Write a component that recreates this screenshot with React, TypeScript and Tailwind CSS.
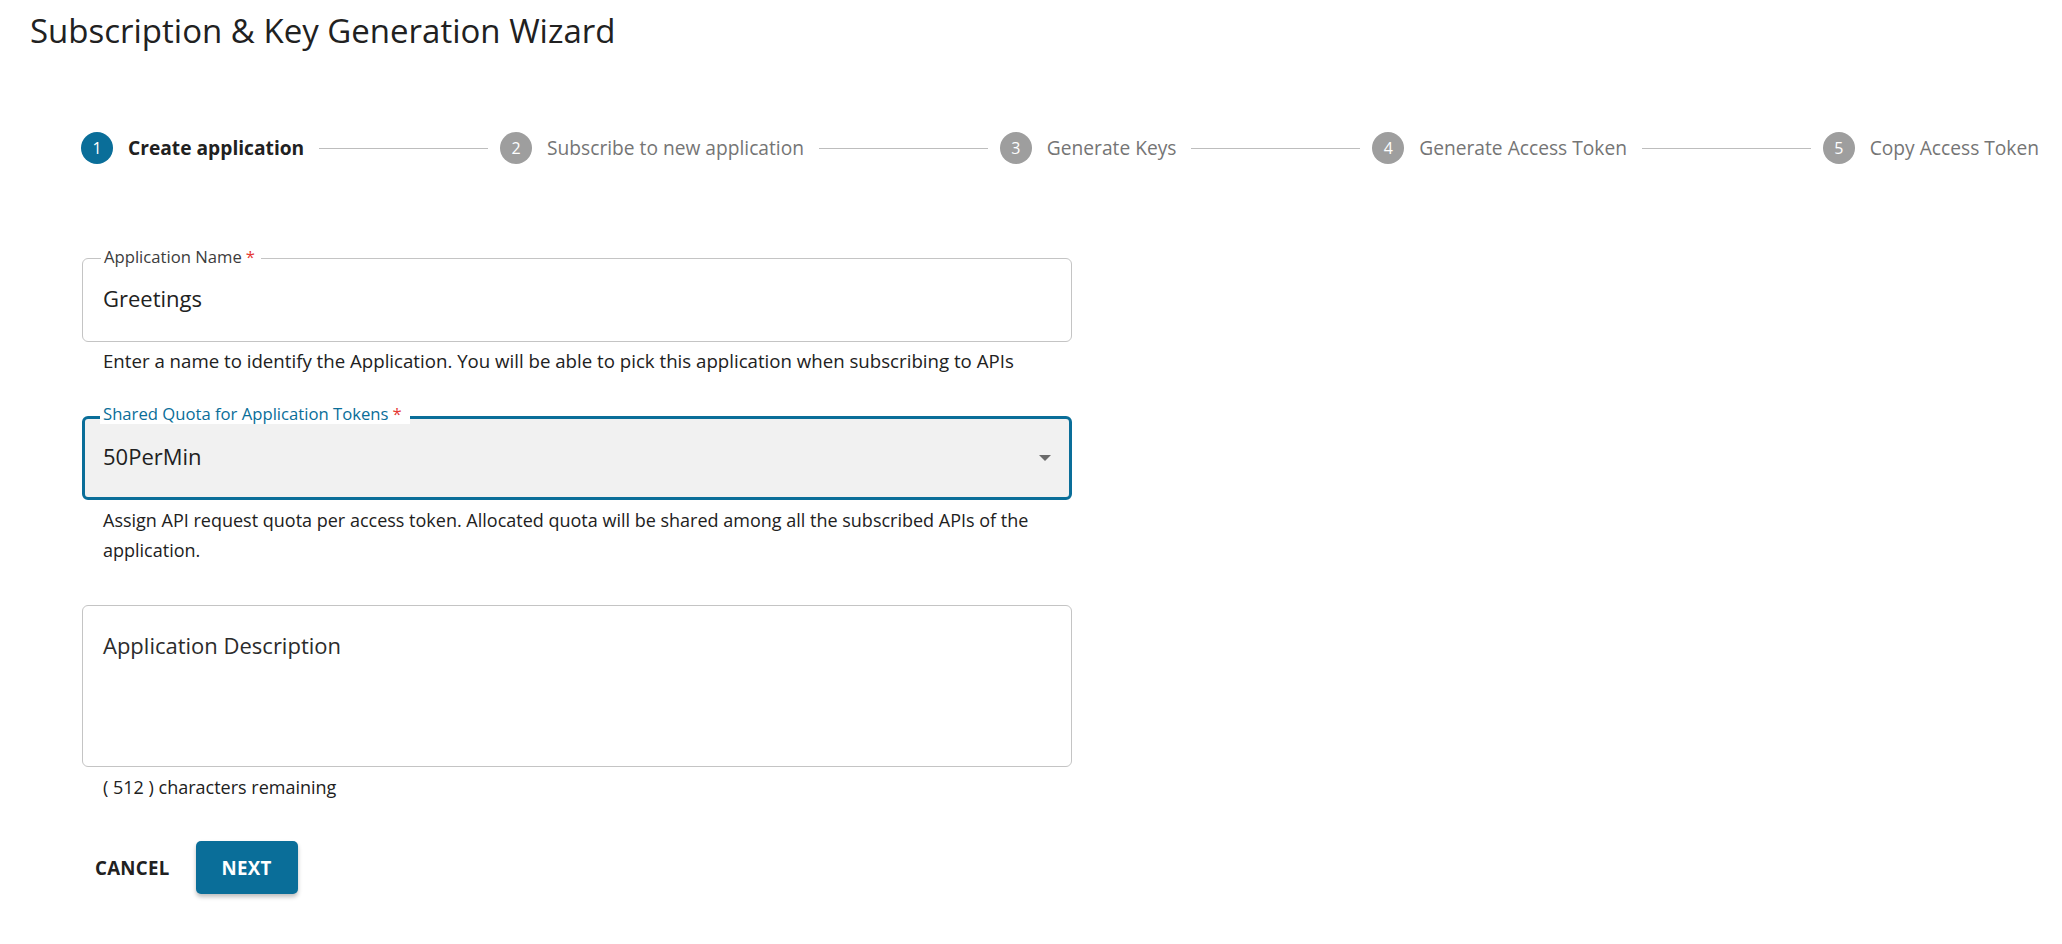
import React from "react";

const PRIMARY = "bg-[#0a6e99]";

function Step({ n, label, active }: { n: number; label: string; active?: boolean }) {
  return (
    <div className="flex items-center pl-[12px] pr-[15px]">
      <div
        className={
          "w-[32px] h-[32px] rounded-full flex items-center justify-center text-[16px] leading-none text-white " +
          (active ? PRIMARY : "bg-[#9e9e9e]")
        }
      >
        {n}
      </div>
      <span
        className={
          "ml-[15px] text-[19.2px] leading-[26px] whitespace-nowrap " +
          (active ? "font-bold text-[#212121]" : "text-[#757575]")
        }
      >
        {label}
      </span>
    </div>
  );
}

function Connector() {
  return <div className="flex-1 h-px bg-[#bdbdbd]" />;
}

export default function App() {
  return (
    <div className="w-[2062px] h-[944px] bg-white text-[#212121] font-['Open_Sans',sans-serif]">
      <h1 className="pl-[30px] pt-[11px] text-[33px] leading-[40px] font-normal text-[#212121]">
        Subscription &amp; Key Generation Wizard
      </h1>

      <div className="mt-[81px] flex items-center pl-[69px] pr-[8px]">
        <Step n={1} label="Create application" active />
        <Connector />
        <Step n={2} label="Subscribe to new application" />
        <Connector />
        <Step n={3} label="Generate Keys" />
        <Connector />
        <Step n={4} label="Generate Access Token" />
        <Connector />
        <Step n={5} label="Copy Access Token" />
      </div>

      <div className="ml-[82px] w-[990px] mt-[94px]">
        {/* Application Name */}
        <div className="relative h-[84px] border border-[#c4c4c4] rounded-[6px] flex items-center pl-[20px] pb-[4px]">
          <span className="absolute left-[18px] -top-[12px] bg-white pl-[3px] pr-[6px] text-[16.67px] leading-[20px] text-[#3c3c3c] whitespace-nowrap">
            Application Name<span className="ml-[4px] text-[#e53935]">*</span>
          </span>
          <span className="text-[22px] leading-[28px] text-[#212121]">Greetings</span>
        </div>
        <p className="mt-[4px] pl-[21px] text-[18.67px] leading-[30px] text-[#212121]">
          Enter a name to identify the Application. You will be able to pick this application when subscribing to APIs
        </p>

        {/* Shared Quota */}
        <div className="relative mt-[40px] h-[84px] border-[3px] border-[#0a6e99] rounded-[6px] bg-[#f1f1f1] flex items-center pl-[18px] pb-[4px]">
          <span className="absolute left-[15px] -top-[15px] bg-white pl-[3px] pr-[8px] text-[16.67px] leading-[20px] text-[#0a6e99] whitespace-nowrap">
            Shared Quota for Application Tokens<span className="ml-[4px] text-[#e53935]">*</span>
          </span>
          <span className="flex-1 text-[22px] leading-[28px] text-[#212121]">50PerMin</span>
          <svg className="mr-[18px] mt-[4px]" width="12" height="6" viewBox="0 0 12 6">
            <path d="M0 0 L12 0 L6 6 Z" fill="#6b6b6b" />
          </svg>
        </div>
        <p className="mt-[5px] pl-[21px] text-[18px] leading-[30px] text-[#212121] whitespace-nowrap">
          Assign API request quota per access token. Allocated quota will be shared among all the subscribed APIs of the
          <br />
          application.
        </p>

        {/* Description */}
        <div className="mt-[40px] h-[162px] border border-[#c4c4c4] rounded-[6px] pl-[20px] pt-[26px]">
          <span className="text-[22px] leading-[26px] text-[#2b2b2b]">Application Description</span>
        </div>
        <p className="mt-[5px] pl-[21px] text-[18px] leading-[30px] text-[#212121]">( 512 ) characters remaining</p>

        {/* Buttons */}
        <div className="mt-[39px] flex items-center">
          <button className="ml-[2px] h-[53px] px-[11px] text-[18.67px] font-bold uppercase text-[#212121] tracking-[0.3px]">
            Cancel
          </button>
          <button className="ml-[15px] h-[53px] w-[102px] rounded-[5px] bg-[#0a6e99] text-white text-[18.67px] font-bold uppercase tracking-[0.3px] shadow-[0_3px_4px_rgba(0,0,0,0.25)]">
            Next
          </button>
        </div>
      </div>
    </div>
  );
}
